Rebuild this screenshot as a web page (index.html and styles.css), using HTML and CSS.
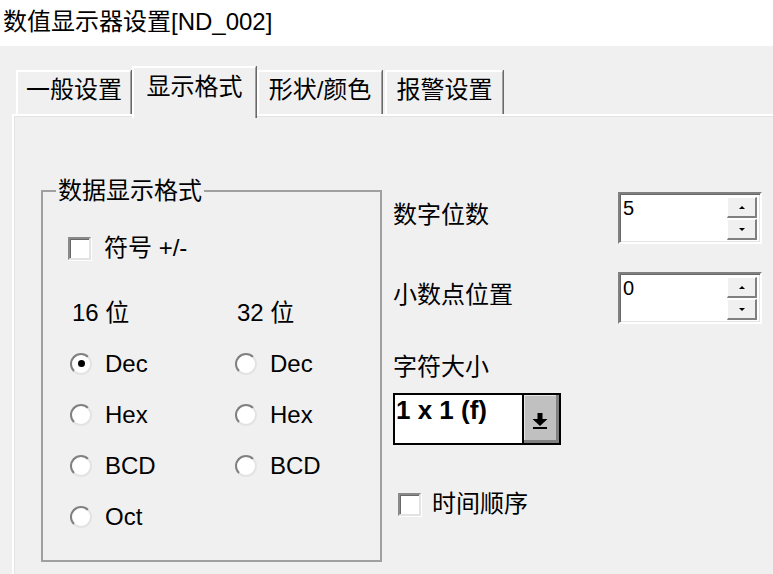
FILE: index.html
```html
<!DOCTYPE html>
<html lang="zh-CN">
<head>
    <meta charset="UTF-8">
    <meta name="viewport" content="width=device-width, initial-scale=1.0">
    <title>数值显示器设置[ND_002]</title>
    <link rel="stylesheet" href="styles.css">
</head>
<body>
    <div class="titlebar">数值显示器设置[ND_002]</div>

    <div class="tabs">
        <div class="tab tab-general">一般设置</div>
        <div class="tab tab-format active">显示格式</div>
        <div class="tab tab-shape">形状/颜色</div>
        <div class="tab tab-alarm">报警设置</div>
    </div>

    <div class="panel">
        <fieldset class="group">
            <legend>数据显示格式</legend>
            <div class="group-body">
                <div class="check-item sign-row"><span class="checkbox"></span>符号 +/-</div>
                <div class="bits">16 位</div>
                <div class="bits">32 位</div>

                <div class="radio-item"><span class="radio checked"><span class="dot"></span></span>Dec</div>
                <div class="radio-item"><span class="radio"></span>Dec</div>
                <div class="radio-item"><span class="radio"></span>Hex</div>
                <div class="radio-item"><span class="radio"></span>Hex</div>
                <div class="radio-item"><span class="radio"></span>BCD</div>
                <div class="radio-item"><span class="radio"></span>BCD</div>
                <div class="radio-item"><span class="radio"></span>Oct</div>
            </div>
        </fieldset>

        <div class="settings">
            <div class="field-row">
                <span class="field-label">数字位数</span>
                <div class="spin">
                    <div class="spin-value">5</div>
                    <div class="spin-buttons">
                        <div class="spin-btn"><span class="arrow-up"></span></div>
                        <div class="spin-btn"><span class="arrow-down"></span></div>
                    </div>
                </div>
            </div>
            <div class="field-row">
                <span class="field-label">小数点位置</span>
                <div class="spin">
                    <div class="spin-value">0</div>
                    <div class="spin-buttons">
                        <div class="spin-btn"><span class="arrow-up"></span></div>
                        <div class="spin-btn"><span class="arrow-down"></span></div>
                    </div>
                </div>
            </div>

            <div class="size-label">字符大小</div>
            <div class="combo">
                <div class="combo-value">1 x 1 (f)</div>
                <div class="combo-btn">
                    <svg width="35" height="48" viewBox="0 0 35 48">
                        <rect x="13.5" y="18" width="5" height="6" fill="#000"/>
                        <polygon points="8.5,24 23.5,24 16,31" fill="#000"/>
                        <rect x="9" y="32" width="14" height="2" fill="#000"/>
                    </svg>
                </div>
            </div>

            <div class="check-item time-row"><span class="checkbox"></span>时间顺序</div>
        </div>
    </div>
</body>
</html>
```

FILE: styles.css
```css
* {
    box-sizing: border-box;
}

body {
    margin: 0;
    height: 100vh;
    overflow: hidden;
    display: flex;
    flex-direction: column;
    background: #f0f0f0;
    color: #000;
    font-family: "Liberation Sans", "Noto Sans CJK SC", sans-serif;
    font-size: 24px;
}

.titlebar {
    height: 46px;
    line-height: 44px;
    padding-left: 3px;
    background: #fff;
}

/* tab strip */
.tabs {
    display: flex;
    align-items: flex-end;
    padding: 20px 0 0 16px;
}

.tab {
    height: 44px;
    line-height: 36px;
    text-align: center;
    border-top: 2px solid #fff;
    border-left: 2px solid #fff;
    border-right: 1px solid #a0a0a0;
    box-shadow: 1px 0 0 #696969;
}

.tab.active {
    position: relative;
    z-index: 1;
    height: 52px;
    line-height: 38px;
    margin-bottom: -4px;
    background: #f0f0f0;
}

.tab-general { width: 115px; }
.tab-format { width: 124px; margin-left: 1px; }
.tab-shape { width: 125px; margin-left: 1px; }
.tab-alarm { width: 118px; margin-left: 3px; }

.panel {
    flex: 1;
    display: flex;
    align-items: flex-start;
    margin-left: 12px;
    padding: 63px 0 0 27px;
    border-top: 2px solid #fff;
    border-left: 2px solid #fff;
    box-shadow: inset 1px 1px 0 #e3e3e3;
}

/* group box */
.group {
    width: 341px;
    min-width: 0;
    margin: 0;
    padding: 0;
    border: 2px solid #a0a0a0;
}

.group legend {
    margin-left: 13px;
    padding: 0 2px;
    line-height: 24px;
}

.group-body {
    display: grid;
    grid-template-columns: 165px 1fr;
    grid-template-rows: 50px 65px repeat(4, 51px);
    align-items: center;
    padding: 20px 0 18px 27px;
}

.sign-row {
    grid-column: 1 / -1;
    margin-left: -2px;
}

.bits {
    align-self: end;
    line-height: 50px;
    padding-left: 2px;
}

.check-item,
.radio-item {
    display: flex;
    align-items: center;
    gap: 13px;
    line-height: 30px;
}

.checkbox {
    width: 23px;
    height: 23px;
    flex-shrink: 0;
    background: #fff;
    border: 2px solid;
    border-color: #8a8a8a #e3e3e3 #e3e3e3 #8a8a8a;
    box-shadow: inset 1px 1px 0 #696969, 1px 1px 0 #fff;
}

.radio {
    width: 22px;
    height: 22px;
    flex-shrink: 0;
    display: flex;
    align-items: center;
    justify-content: center;
    border-radius: 50%;
    background: #fff;
    border: 2px solid;
    border-color: #808080 #e3e3e3 #e3e3e3 #808080;
}

.radio .dot {
    width: 7px;
    height: 7px;
    border-radius: 50%;
    background: #000;
}

/* right column */
.settings {
    width: 369px;
    margin: 13px 0 0 11px;
}

.field-row {
    display: flex;
    align-items: center;
    justify-content: space-between;
    height: 52px;
}

.field-row + .field-row {
    margin-top: 28px;
}

.field-label {
    line-height: 30px;
    margin-bottom: 6px;
}

.spin {
    width: 144px;
    height: 52px;
    display: flex;
    background: #fff;
    border: 2px solid;
    border-color: #808080 #fff #fff #808080;
    box-shadow: inset 1px 1px 0 #696969, inset -1px -1px 0 #e3e3e3;
}

.spin-value {
    flex: 1;
    padding: 2px 0 0 3px;
    font-size: 20px;
    line-height: 24px;
}

.spin-buttons {
    display: flex;
    flex-direction: column;
    gap: 1px;
    padding: 3px 3px 2px 0;
}

.spin-btn {
    width: 30px;
    height: 21px;
    display: flex;
    align-items: center;
    justify-content: center;
    background: #f0f0f0;
    border-style: solid;
    border-width: 1px 2px 2px 1px;
    border-color: #fff #808080 #808080 #fff;
}

.arrow-up {
    width: 0;
    height: 0;
    border-left: 3px solid transparent;
    border-right: 3px solid transparent;
    border-bottom: 3px solid #000;
}

.arrow-down {
    width: 0;
    height: 0;
    border-left: 3px solid transparent;
    border-right: 3px solid transparent;
    border-top: 3px solid #000;
}

.size-label {
    margin-top: 28px;
    line-height: 30px;
}

.combo {
    display: flex;
    width: 168px;
    height: 52px;
    margin-top: 11px;
    background: #fff;
    border: 2px solid #000;
}

.combo-value {
    flex: 1;
    padding-left: 1px;
    font-size: 26px;
    font-weight: bold;
    line-height: 30px;
}

.combo-btn {
    width: 37px;
    border-left: 2px solid #000;
    background: #c0c0c0;
    box-shadow: inset -3px -3px 0 #808080, inset 1px 1px 0 #e3e3e3;
}

.combo-btn svg {
    display: block;
}

.time-row {
    margin: 44px 0 0 5px;
    gap: 11px;
}
```
